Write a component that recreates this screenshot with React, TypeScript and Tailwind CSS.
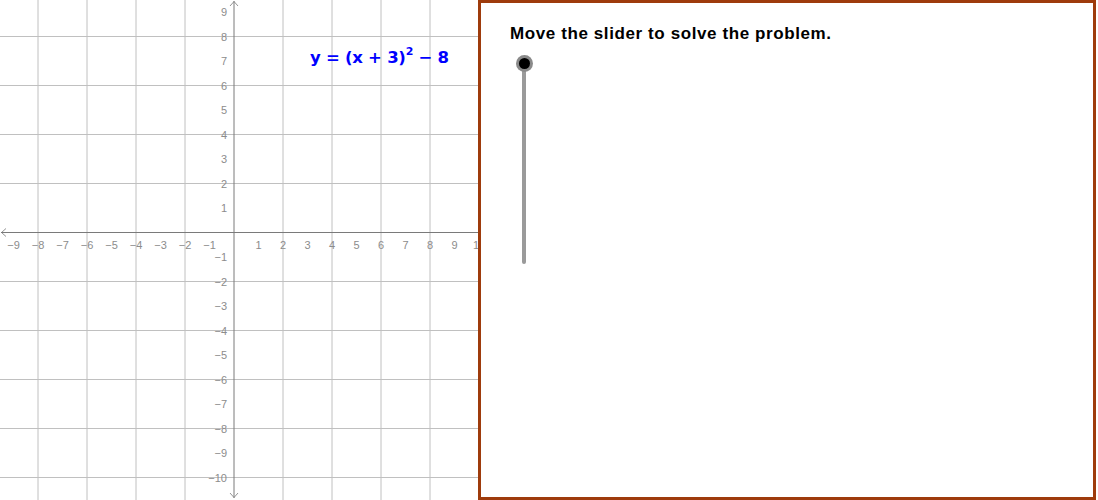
import React from "react";

const UNIT = 24.5;
const OX = 234;
const OY = 232.5;

const xs = (v: number) => OX + v * UNIT;
const ys = (v: number) => OY - v * UNIT;

function Graph() {
    const gridX = [-8, -6, -4, -2, 2, 4, 6, 8];
    const gridY = [-10, -8, -6, -4, -2, 2, 4, 6, 8];
    const xLabels = [-9, -8, -7, -6, -5, -4, -3, -2, -1, 1, 2, 3, 4, 5, 6, 7, 8, 9, 10];
    const yLabels = [-10, -9, -8, -7, -6, -5, -4, -3, -2, -1, 1, 2, 3, 4, 5, 6, 7, 8, 9];
    const fmt = (n: number) => (n < 0 ? "\u2212" + Math.abs(n) : String(n));

    return (
        <svg width="478" height="500" viewBox="0 0 478 500" className="block">
            {gridX.map((v) => (
                <line key={"gx" + v} x1={xs(v)} y1={0} x2={xs(v)} y2={500} stroke="#c0c0c0" strokeWidth="1" />
            ))}
            {gridY.map((v) => (
                <line key={"gy" + v} x1={0} y1={ys(v)} x2={478} y2={ys(v)} stroke="#c0c0c0" strokeWidth="1" />
            ))}

            {/* axes */}
            <line x1={1} y1={OY} x2={478} y2={OY} stroke="#7a7a7a" strokeWidth="1" />
            <line x1={OX} y1={1} x2={OX} y2={498} stroke="#7a7a7a" strokeWidth="1" />
            <polyline points={`${OX - 4},6 ${OX},1.5 ${OX + 4},6`} fill="none" stroke="#7a7a7a" strokeWidth="0.8" />
            <polyline points={`${OX - 4},493 ${OX},497.5 ${OX + 4},493`} fill="none" stroke="#7a7a7a" strokeWidth="0.8" />
            <polyline points={`6,${OY - 4} 1.5,${OY} 6,${OY + 4}`} fill="none" stroke="#7a7a7a" strokeWidth="0.8" />

            <g fontFamily="'Liberation Sans', Arial, sans-serif" fontSize="11" fill="#8c8c8c">
                {xLabels.map((v) => (
                    <text key={"xl" + v} x={xs(v)} y={OY + 16} textAnchor="middle">
                        {fmt(v)}
                    </text>
                ))}
                {yLabels.map((v) => (
                    <text key={"yl" + v} x={227} y={ys(v) + 4} textAnchor="end">
                        {fmt(v)}
                    </text>
                ))}
            </g>

            <text
                x={310}
                y={63}
                fill="#0000ff"
                fontFamily="'DejaVu Sans', 'Liberation Sans', sans-serif"
                fontWeight="bold"
                fontSize="16.5"
                textLength={139}
            >
                y = (x + 3)
                <tspan fontSize="11" dy="-8">2</tspan>
                <tspan dy="8"> − 8</tspan>
            </text>
        </svg>
    );
}

function SliderPanel() {
    return (
        <div className="w-[618px] h-[500px] border-[3px] border-[#9e3b0c] bg-white">
            <div className="pl-[29px] pt-[21px] text-[17px] tracking-[0.6px] font-bold text-black leading-[20px] font-['Liberation_Sans',Arial,sans-serif]">
                Move the slider to solve the problem.
            </div>
            <div className="relative ml-[35px] mt-[11px] w-[17px] h-[212px]">
                <div className="absolute left-[6px] top-[6px] w-[4px] h-[203px] bg-[#9a9a9a] rounded-[2px]" />
                <div className="absolute left-0 top-0 w-[17px] h-[17px] rounded-full bg-[#8a8a8a] flex items-center justify-center">
                    <div className="w-[11px] h-[11px] rounded-full bg-black" />
                </div>
            </div>
        </div>
    );
}

export default function App() {
    return (
        <div className="flex w-[1098px] h-[500px] bg-white overflow-hidden">
            <Graph />
            <SliderPanel />
        </div>
    );
}
